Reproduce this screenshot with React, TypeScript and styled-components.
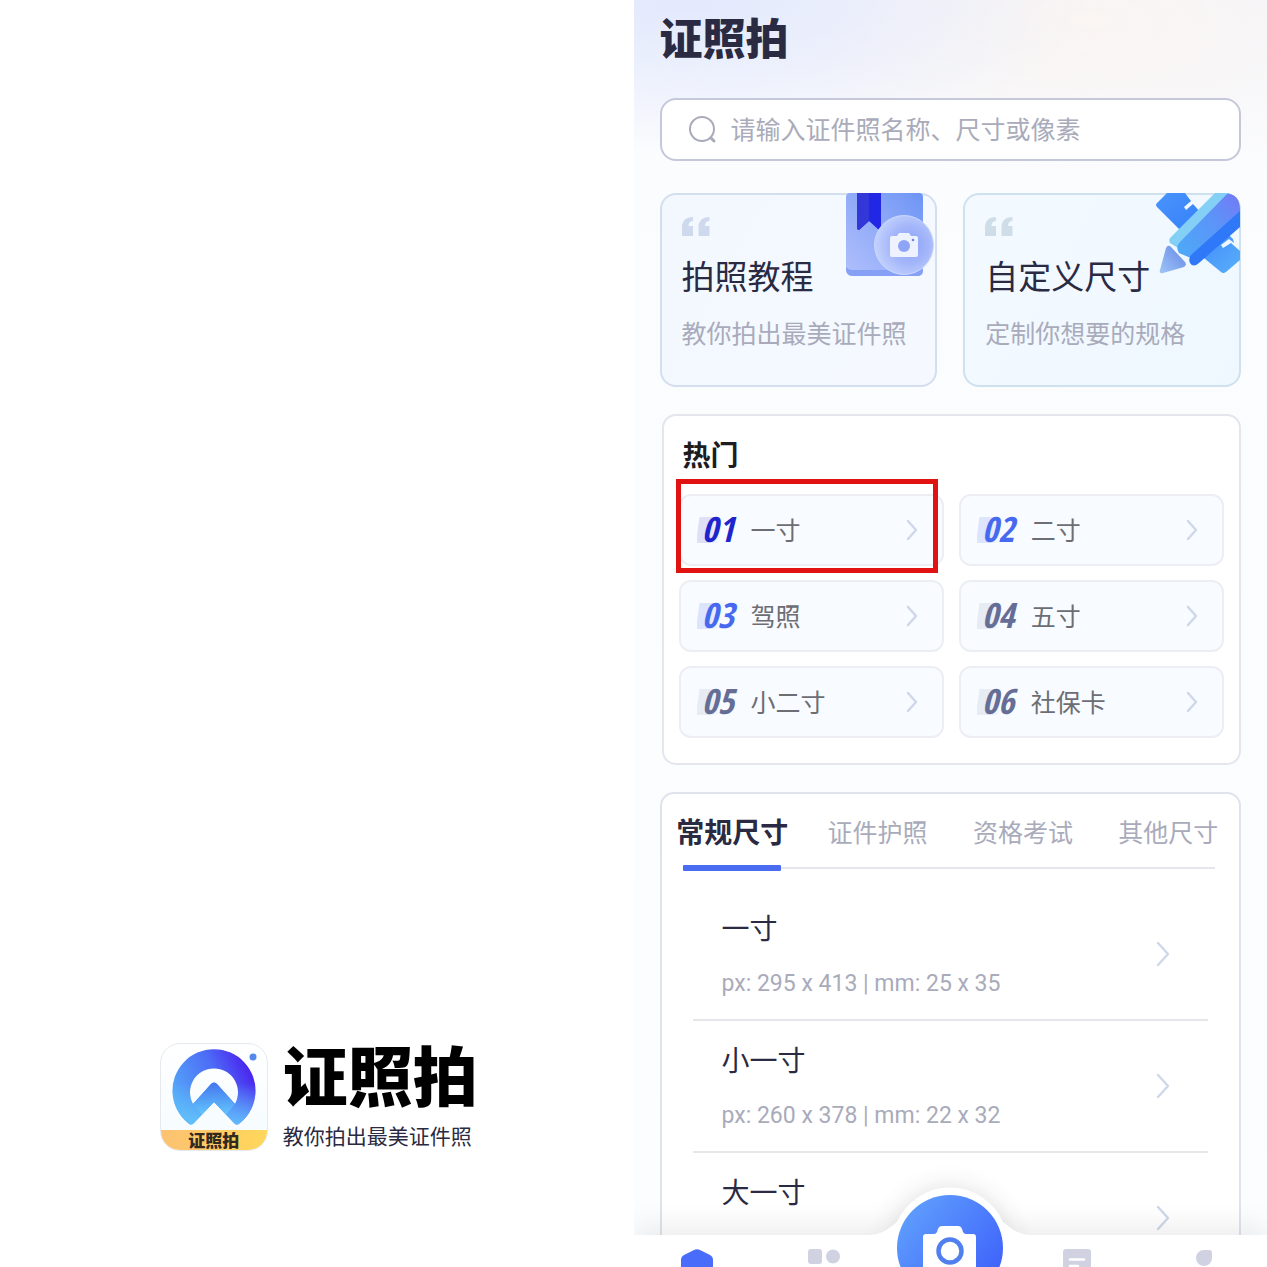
import React from 'react';
import styled, { createGlobalStyle } from 'styled-components';

const GlobalStyle = createGlobalStyle`
  *, *::before, *::after { box-sizing: border-box; }
  body {
    margin: 0;
    background: #fff;
    font-family: "Noto Sans CJK SC", sans-serif;
    color: #2a2a42;
  }
  button, input { font: inherit; color: inherit; }
  button { padding: 0; border: 0; background: none; cursor: pointer; text-align: left; }
  h1, h2, p, ol, ul { margin: 0; padding: 0; list-style: none; font-weight: inherit; }
  svg { display: block; flex: none; }
`;

const Page = styled.div`
  display: grid;
  grid-template-columns: 1fr 1fr;
  height: 100vh;
  overflow: hidden;
`;

/* Splash */

const Splash = styled.section`
  display: flex;
  align-items: flex-end;
  justify-content: center;
  padding: 0 0 116px 4px;
`;

const Brand = styled.div`
  display: flex;
  gap: 15px;
`;

const AppIcon = styled.div`
  display: flex;
  flex-direction: column;
  width: 108px;
  height: 108px;
  border: 1px solid #e6e9ee;
  border-radius: 20px;
  overflow: hidden;
  background: linear-gradient(#fff, #f4fbff);
`;

const AppIconLabel = styled.span`
  flex: 1;
  background: linear-gradient(90deg, #fcc172, #ffd75a);
  color: #33291f;
  font-size: 17px;
  font-weight: 900;
  line-height: 20px;
  text-align: center;
`;

const BrandText = styled.div`
  display: flex;
  flex-direction: column;
  gap: 18px;
`;

const BrandName = styled.h1`
  color: #000;
  font-size: 65px;
  font-weight: 900;
  line-height: 60px;
`;

const BrandTagline = styled.p`
  font-size: 21px;
  line-height: 28px;
`;

/* Home screen */

const Phone = styled.section`
  display: flex;
  flex-direction: column;
  min-height: 0;
  min-width: 0;
  overflow: hidden;
  background:
    radial-gradient(ellipse 400px 150px at 8% 0, #e3e9fd 0%, rgba(227, 233, 253, 0) 100%),
    radial-gradient(ellipse 380px 160px at 72% 20px, #faf5f2 0%, rgba(250, 245, 242, 0) 100%),
    linear-gradient(#f2f5fc 0, #fbfcfe 150px, #fcfdfe 100%);
`;

const Content = styled.main`
  flex: 1;
  min-height: 0;
  overflow: hidden;
  display: flex;
  flex-direction: column;
  gap: 27px;
  padding: 0 26px;
  & > * { flex: none; }
`;

const Header = styled.header`
  display: flex;
  flex-direction: column;
  gap: 20px;
  padding-bottom: 5px;
`;

const ScreenTitle = styled.h2`
  height: 78px;
  font-size: 43px;
  font-weight: 900;
  line-height: 72px;
`;

const SearchBox = styled.label`
  display: flex;
  align-items: center;
  gap: 14px;
  height: 63px;
  padding: 0 26px;
  border: 2px solid #c5c8da;
  border-radius: 16px;
  background: #fff;
`;

const SearchInput = styled.input`
  flex: 1;
  min-width: 0;
  padding: 0 0 3px;
  border: 0;
  outline: 0;
  background: none;
  font-size: 25px;
  line-height: 36px;
  &::placeholder { color: #a9abba; opacity: 1; }
`;

const Promos = styled.div`
  display: grid;
  grid-template-columns: 1fr 1fr;
  gap: 26px;
`;

const Promo = styled.button<{ $line: string; $from: string; $to: string }>`
  position: relative;
  display: flex;
  flex-direction: column;
  height: 194px;
  padding: 22px 20px;
  border: 2px solid ${p => p.$line};
  border-radius: 16px;
  background: linear-gradient(120deg, ${p => p.$from}, ${p => p.$to});
`;

const PromoArt = styled.span<{ $right: number }>`
  position: absolute;
  top: -2px;
  right: ${p => p.$right}px;
`;

const PromoTitle = styled.span`
  margin-top: 17px;
  font-size: 33px;
  line-height: 44px;
`;

const PromoNote = styled.span`
  margin-top: 17px;
  color: #a9abbb;
  font-size: 25px;
  line-height: 36px;
`;

const HotPanel = styled.section`
  display: flex;
  flex-direction: column;
  gap: 20px;
  margin-left: 2px;
  padding: 18px 15px 25px;
  border: 2px solid #e3e6ed;
  border-radius: 14px;
  background: #fff;
`;

const HotTitle = styled.h2`
  padding-left: 4px;
  color: #1d1d1f;
  font-size: 28px;
  font-weight: 700;
  line-height: 40px;
`;

const HotGrid = styled.ol`
  display: grid;
  grid-template-columns: 1fr 1fr;
  gap: 14px 15px;
`;

const HotItem = styled.li`
  position: relative;
`;

const HotButton = styled.button`
  display: flex;
  align-items: center;
  width: 100%;
  height: 72px;
  padding: 0 24px 0 16px;
  border: 2px solid #eceef4;
  border-radius: 12px;
  background: #f8fbff;
`;

const Rank = styled.span<{ $color: string; $shade: string }>`
  width: 40px;
  height: 26px;
  padding-left: 5px;
  background: linear-gradient(98deg, transparent 2px, ${p => p.$shade} 3px, ${p => p.$shade} 14px, transparent 26px);
  color: ${p => p.$color};
  font-family: "Open Sans Condensed", "Noto Sans Condensed", "Roboto Condensed", "Noto Sans", sans-serif;
  font-size: 35px;
  font-style: italic;
  font-weight: 800;
  line-height: 24px;
`;

const HotName = styled.span`
  flex: 1;
  margin-left: 14px;
  padding-bottom: 2px;
  color: #6d6e73;
  font-size: 25px;
  line-height: 36px;
`;

const Highlight = styled.span`
  position: absolute;
  inset: -15px 6px -7px -3px;
  border: 5px solid #e01212;
  pointer-events: none;
`;

const SizePanel = styled.section`
  border: 2px solid #e0e3ec;
  border-radius: 14px;
  background: #fff;
`;

const Tabs = styled.div`
  position: relative;
  z-index: 1;
  display: grid;
  grid-template-columns: repeat(4, 1fr);
  margin: 0 -2px;
`;

const Tab = styled.button<{ $active: boolean }>`
  display: flex;
  flex-direction: column;
  align-items: center;
  gap: 14px;
  padding-top: 17px;
  color: ${p => (p.$active ? '#2a2a42' : '#a9abbb')};
  font-size: ${p => (p.$active ? 28 : 25)}px;
  font-weight: ${p => (p.$active ? 700 : 400)};
  line-height: 40px;
  white-space: nowrap;
  &::after {
    content: "";
    width: 98px;
    height: 6px;
    border-radius: 1px;
    background: ${p => (p.$active ? '#4a6cf0' : 'transparent')};
  }
`;

const Rail = styled.div`
  height: 2px;
  margin: -4px 24px 0 21px;
  background: #e6e7ea;
`;

const SizeList = styled.ul`
  margin: 0 31px;
  padding-top: 20px;
`;

const SizeItem = styled.li`
  border-bottom: 2px solid #e6e7ea;
`;

const SizeButton = styled.button`
  display: flex;
  align-items: center;
  justify-content: space-between;
  width: 100%;
  height: 130px;
  padding: 0 38px 0 29px;
`;

const SizeText = styled.span`
  display: flex;
  flex-direction: column;
  gap: 18px;
  height: 94px;
`;

const SizeName = styled.span`
  font-size: 28px;
  line-height: 40px;
`;

const SizeSpec = styled.span`
  color: #a9abbb;
  font-family: Roboto, "Noto Sans CJK SC", sans-serif;
  font-size: 23px;
  line-height: 38px;
`;

/* Tab bar */

const NavBar = styled.nav`
  position: relative;
  flex: none;
  display: grid;
  grid-template-columns: repeat(5, minmax(0, 1fr));
  height: 32px;
  background: #fff;
  box-shadow: 0 -4px 32px rgba(0, 0, 0, 0.1);
`;

const NavButton = styled.button`
  display: flex;
  justify-content: center;
  align-items: flex-start;
  padding-top: 14px;
`;

const ShutterButton = styled.button`
  position: relative;
  display: flex;
  justify-content: center;
  margin-top: -45px;
  & > svg { overflow: visible; }
`;

const Chevron = ({ w, h }: { w: number; h: number }) => (
  <svg width={w} height={h} viewBox={`0 0 ${w} ${h}`} fill="none" stroke="#ced8e8" strokeWidth="2.4" strokeLinecap="round" strokeLinejoin="round">
    <path d={`M2 2L${w - 2} ${h / 2}L2 ${h - 2}`} />
  </svg>
);

const Quote = ({ color }: { color: string }) => (
  <svg width="28" height="19" viewBox="0 0 28 19" fill={color}>
    <path d="M11 0v4C8 4 6.500 6 6.500 9H11v10H0V10C0 4 4 0 11 0Z" />
    <path d="M27.500 0v4c-3 0-4.500 2-4.500 5h4.500v10h-11V10c0-6 4-10 11-10Z" />
  </svg>
);

const BookArt = () => (
  <svg width="88" height="84" viewBox="0 0 88 84">
    <defs>
      <linearGradient id="book" x1="0" y1="1" x2="1" y2="0">
        <stop offset="0" stopColor="#b0bffb" /><stop offset=".5" stopColor="#92acf8" /><stop offset="1" stopColor="#6d94f5" />
      </linearGradient>
      <radialGradient id="lens" cx=".6" cy=".5" r=".6">
        <stop offset="0" stopColor="#8ba1f6" /><stop offset=".55" stopColor="#a5b7fa" /><stop offset="1" stopColor="#c3d2fd" />
      </radialGradient>
    </defs>
    <path d="M0 4Q0 0 4 0H73Q77 0 77 4V77Q77 83 71 83H7Q0 83 0 76Z" fill="url(#book)" />
    <path d="M0 74Q2 77 7 77H77Q77 83 71 83H7Q0 83 0 76Z" fill="#86a0f5" />
    <path d="M11 0H35V36L33 37L23 28L13 37L11 36Z" fill="#2227e6" />
    <path d="M11 0H23V28L13 37L11 36Z" fill="#3437d8" />
    <circle cx="58" cy="52" r="29.500" fill="url(#lens)" stroke="#c9d8fd" strokeWidth="1" />
    <path d="M46 43h5l2-3h10l2 3h5q2 0 2 2v17q0 2-2 2H46q-2 0-2-2V45q0-2 2-2Z" fill="#eef2ff" />
    <circle cx="58" cy="53" r="6" fill="#8ea4f6" />
    <circle cx="67" cy="47" r="1.300" fill="#6f83dc" />
  </svg>
);

const PencilArt = () => (
  <svg width="86" height="82" viewBox="0 0 86 82">
    <defs>
      <clipPath id="corner"><path d="M0 0H70Q85 1 85 16V82H0Z" /></clipPath>
      <linearGradient id="rulerA" x1="0" y1="0" x2="1" y2="1"><stop offset="0" stopColor="#4a94fb" /><stop offset="1" stopColor="#3480fa" /></linearGradient>
      <linearGradient id="rulerB" x1="0" y1="0" x2="1" y2="1"><stop offset="0" stopColor="#4289fa" /><stop offset="1" stopColor="#58b0fa" /></linearGradient>
      <linearGradient id="body" x1="0" y1="1" x2="1" y2="0"><stop offset="0" stopColor="#4cabf8" /><stop offset=".6" stopColor="#5c93f8" /><stop offset="1" stopColor="#7678f6" /></linearGradient>
      <linearGradient id="tip" x1="0" y1="1" x2="1" y2="0"><stop offset="0" stopColor="#9fc4f8" /><stop offset="1" stopColor="#6488e4" /></linearGradient>
    </defs>
    <g clipPath="url(#corner)">
      <path d="M2 14Q0 12 2 10L12 0H30L36 8L29 14L31 17L38 11L46 20L26 38Z" fill="url(#rulerA)" />
      <path d="M44 61L72 40L78 46L79 50L74 46L66 52L68 55L76 50L85 58V67L71 79Q68 81 66 79Z" fill="url(#rulerB)" />
      <path d="M15 50Q13 47 16 44L60 0H84L28 58Z" fill="#84cff6" />
      <path d="M24 60Q20 54 25 49L73 0H86V26L38 66Z" fill="url(#body)" />
      <path d="M35 70Q33 66 36 62L86 17V33L44 70Q38 75 35 70Z" fill="#2f78f8" />
      <path d="M11 55Q13 51 16 54L30 69Q32 72 29 74L8 80Q4 81 5 77Z" fill="url(#tip)" />
    </g>
  </svg>
);

const archPath = 'M28 80A41.500 41.500 0 1 1 80 80Q77 83 74 80L54 59L34 80Q31 83 28 80ZM33 61L51 41Q54 38 57 41L75 61A24 24 0 1 0 33 61Z';

const Emblem = () => (
  <svg width="106" height="86" viewBox="1 1 106 86">
    <defs>
      <linearGradient id="arch" x1=".9" y1=".2" x2="0" y2=".6">
        <stop offset="0" stopColor="#4a25ee" /><stop offset=".4" stopColor="#4d6cf6" /><stop offset="1" stopColor="#55a8f8" />
      </linearGradient>
      <linearGradient id="fold" x1=".5" y1="0" x2=".5" y2="1">
        <stop offset="0" stopColor="#4574f0" /><stop offset="1" stopColor="#62c6fc" />
      </linearGradient>
      <linearGradient id="fade" x1="0" y1="0" x2="0" y2="1">
        <stop offset=".45" stopColor="#63c3fb" stopOpacity="0" /><stop offset="1" stopColor="#63c3fb" stopOpacity=".9" />
      </linearGradient>
    </defs>
    <path d={archPath} fill="url(#arch)" />
    <path d={archPath} fill="url(#fade)" />
    <path d="M33 61L51 41Q54 38 57 41L75 61L66 71.500L54 59L42 71.500Z" fill="url(#fold)" />
    <circle cx="93" cy="14" r="3.500" fill="#5289ea" />
  </svg>
);

const Shutter = () => (
  <svg width="164" height="77" viewBox="0 0 164 77">
    <defs>
      <linearGradient id="shutter" x1=".1" y1=".1" x2=".9" y2=".75">
        <stop offset="0" stopColor="#5f9efd" /><stop offset="1" stopColor="#4065fb" />
      </linearGradient>
      <radialGradient id="halo" gradientUnits="userSpaceOnUse" cx="82" cy="58" r="84">
        <stop offset=".68" stopColor="#000" stopOpacity=".07" /><stop offset=".84" stopColor="#000" stopOpacity=".02" /><stop offset="1" stopColor="#000" stopOpacity="0" />
      </radialGradient>
    </defs>
    <circle cx="82" cy="58" r="84" fill="url(#halo)" />
    <path d="M0 45C16 45 23 36 29 32A58 58 0 0 1 135 32C141 36 148 45 164 45H176V77H-12V45Z" fill="#fff" />
    <circle cx="82" cy="58" r="53" fill="url(#shutter)" />
    <path d="M58 44H66Q68 44 69 42L70 39Q71 36 74 36H90Q93 36 94 39L95 42Q96 44 98 44H105Q108 44 108 47V77H55V47Q55 44 58 44Z" fill="#fff" />
    <circle cx="82" cy="61" r="11.500" fill="#fff" stroke="#5180ee" strokeWidth="4.500" />
  </svg>
);

const hot = [
  { rank: '01', name: '一寸', color: '#2124cd', shade: '#dfdff6', marked: true },
  { rank: '02', name: '二寸', color: '#4769ef', shade: '#dde5fd' },
  { rank: '03', name: '驾照', color: '#4769ef', shade: '#dde5fd' },
  { rank: '04', name: '五寸', color: '#666e96', shade: '#e6ebf4' },
  { rank: '05', name: '小二寸', color: '#666e96', shade: '#e6ebf4' },
  { rank: '06', name: '社保卡', color: '#666e96', shade: '#e6ebf4' },
];

const tabs = ['常规尺寸', '证件护照', '资格考试', '其他尺寸'];

const sizes = [
  { name: '一寸', spec: 'px: 295 x 413 | mm: 25 x 35' },
  { name: '小一寸', spec: 'px: 260 x 378 | mm: 22 x 32' },
  { name: '大一寸' },
];

export default function App() {
  const [active, setActive] = React.useState(0);
  return (
    <Page>
      <GlobalStyle />
      <Splash>
        <Brand>
          <AppIcon>
            <Emblem />
            <AppIconLabel>证照拍</AppIconLabel>
          </AppIcon>
          <BrandText>
            <BrandName>证照拍</BrandName>
            <BrandTagline>教你拍出最美证件照</BrandTagline>
          </BrandText>
        </Brand>
      </Splash>

      <Phone>
        <Content>
          <Header>
            <ScreenTitle>证照拍</ScreenTitle>
            <SearchBox>
              <svg width="29" height="29" viewBox="0 0 29 29" fill="none" stroke="#a9abba" strokeLinecap="round">
                <circle cx="14" cy="14" r="12" strokeWidth="2" />
                <path d="M23 23L26 26" strokeWidth="3" />
              </svg>
              <SearchInput type="text" aria-label="搜索" placeholder="请输入证件照名称、尺寸或像素" />
            </SearchBox>
          </Header>

          <Promos>
            <Promo $line="#d3deee" $from="#f3f8ff" $to="#f5f9ff">
              <Quote color="#cfd9ed" />
              <PromoTitle>拍照教程</PromoTitle>
              <PromoNote>教你拍出最美证件照</PromoNote>
              <PromoArt $right={1}><BookArt /></PromoArt>
            </Promo>
            <Promo $line="#cfe1ee" $from="#f3f9ff" $to="#eff8ff">
              <Quote color="#cfdde8" />
              <PromoTitle>自定义尺寸</PromoTitle>
              <PromoNote>定制你想要的规格</PromoNote>
              <PromoArt $right={-2}><PencilArt /></PromoArt>
            </Promo>
          </Promos>

          <HotPanel>
            <HotTitle>热门</HotTitle>
            <HotGrid>
              {hot.map(h => (
                <HotItem key={h.rank}>
                  <HotButton>
                    <Rank $color={h.color} $shade={h.shade}>{h.rank}</Rank>
                    <HotName>{h.name}</HotName>
                    <Chevron w={12} h={22} />
                  </HotButton>
                  {h.marked && <Highlight />}
                </HotItem>
              ))}
            </HotGrid>
          </HotPanel>

          <SizePanel>
            <Tabs role="tablist">
              {tabs.map((t, i) => (
                <Tab key={t} role="tab" aria-selected={i === active} $active={i === active} onClick={() => setActive(i)}>
                  {t}
                </Tab>
              ))}
            </Tabs>
            <Rail />
            <SizeList>
              {sizes.map(s => (
                <SizeItem key={s.name}>
                  <SizeButton>
                    <SizeText>
                      <SizeName>{s.name}</SizeName>
                      {s.spec && <SizeSpec>{s.spec}</SizeSpec>}
                    </SizeText>
                    <Chevron w={14} h={26} />
                  </SizeButton>
                </SizeItem>
              ))}
            </SizeList>
          </SizePanel>
        </Content>

        <NavBar>
          <NavButton aria-label="首页">
            <svg width="32" height="34" viewBox="0 0 32 34" fill="#4a6cfb">
              <path d="M13 1Q16 -.5 19 1L29 6Q32 7.500 32 11V34H0V11Q0 7.500 3 6Z" />
            </svg>
          </NavButton>
          <NavButton aria-label="分类">
            <svg width="32" height="32" viewBox="0 0 32 32" fill="#d0d2e2">
              <rect width="14" height="15" rx="3" />
              <circle cx="25" cy="7.500" r="7" />
              <rect y="18" width="14" height="14" rx="3" />
              <rect x="18" y="18" width="14" height="14" rx="3" />
            </svg>
          </NavButton>
          <ShutterButton aria-label="拍照"><Shutter /></ShutterButton>
          <NavButton aria-label="订单">
            <svg width="28" height="32" viewBox="0 0 28 32">
              <rect width="28" height="32" rx="3" fill="#d0d2e2" />
              <path d="M7 10.500H21M7 17H15" stroke="#fff" strokeWidth="2.500" strokeLinecap="round" />
            </svg>
          </NavButton>
          <NavButton aria-label="我的">
            <svg width="18" height="32" viewBox="0 0 18 32" fill="#d0d2e2">
              <path d="M9 1H14Q17 1 17 4V9A8 8 0 1 1 9 1Z" />
            </svg>
          </NavButton>
        </NavBar>
      </Phone>
    </Page>
  );
}
